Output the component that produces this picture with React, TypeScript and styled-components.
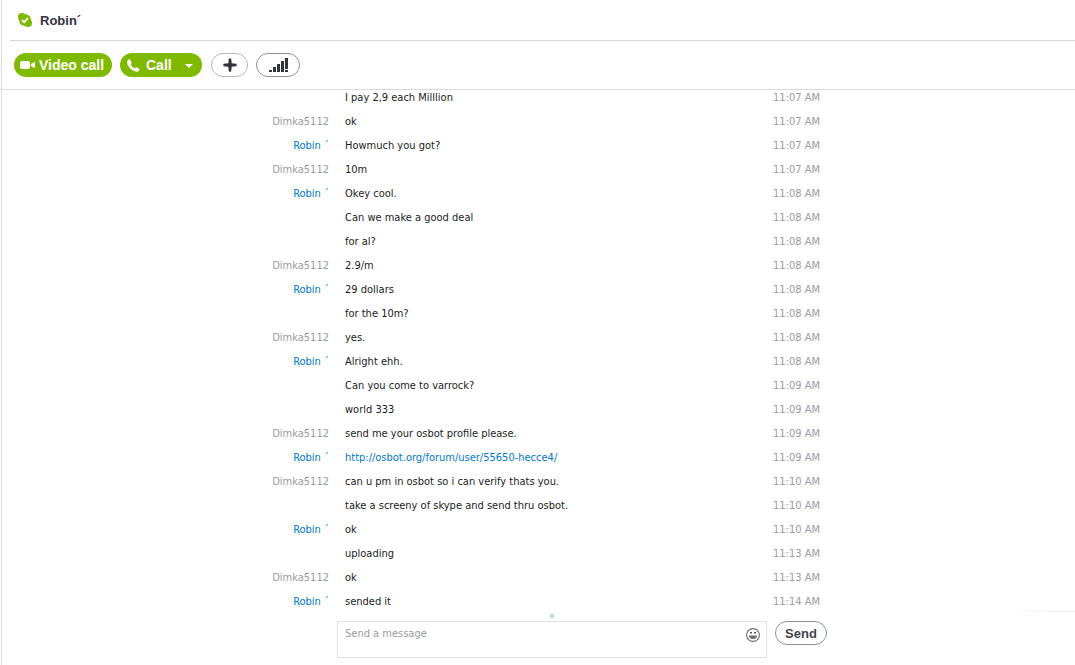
import React from "react";
import styled, { createGlobalStyle } from "styled-components";

const GlobalStyle = createGlobalStyle`
  *, *::before, *::after { box-sizing: border-box; }
  body { margin: 0; background: #fff; }
  button, input, textarea { font: inherit; color: inherit; margin: 0; }
`;

const chatFont = `"DejaVu Sans Condensed", Tahoma, sans-serif`;
const uiFont = `"Liberation Sans", Arial, sans-serif`;

const Window = styled.div`
  display: flex;
  flex-direction: column;
  height: 100vh;
  margin-left: 1px;
  border-left: 1px solid #d9d9db;
  font-family: ${uiFont};
  color: #33333d;
`;

const Header = styled.header`
  display: flex;
  align-items: center;
  gap: 8px;
  height: 41px;
  margin-left: 8px;
  padding-left: 8px;
  border-bottom: 1px solid #d9d9db;
`;

const Title = styled.h1`
  margin: 0;
  padding-top: 1px;
  font-size: 13px;
  line-height: 16px;
  font-weight: bold;
`;

const Toolbar = styled.div`
  display: flex;
  align-items: center;
  height: 49px;
  padding-left: 12px;
  border-bottom: 1px solid #d9d9db;
`;

const Pill = styled.button`
  display: flex;
  align-items: center;
  height: 24px;
  border: none;
  border-radius: 12px;
  background: #7fba00;
  color: #fff;
  font-size: 14px;
  line-height: 24px;
  font-weight: bold;
`;

const VideoButton = styled(Pill)`
  gap: 4px;
  width: 98px;
  padding: 0 6px;
`;

const CallGroup = styled.div`
  display: flex;
  width: 82px;
  margin: 0 9px 0 8px;
`;

const CallButton = styled(Pill)`
  gap: 6px;
  flex: 1;
  padding: 0 0 0 7px;
  border-radius: 12px 0 0 12px;
`;

const CallMenuButton = styled(Pill)`
  width: 25px;
  padding: 2px 0 0 8px;
  border-radius: 0 12px 12px 0;
`;

const OutlineButton = styled.button<{ $width: number; $tone?: string }>`
  display: flex;
  align-items: center;
  justify-content: center;
  width: ${(p) => p.$width}px;
  height: 24px;
  padding: 0;
  border: 1px solid ${(p) => p.$tone ?? "#8c9096"};
  border-radius: 12px;
  background: #fff;
  color: #42454d;
  font-size: 13px;
  font-weight: bold;
`;

const AddButton = styled(OutlineButton)`
  margin-right: 8px;
`;

const Messages = styled.main`
  display: flex;
  flex: 1;
  min-height: 0;
  flex-direction: column;
  justify-content: flex-end;
  align-items: center;
  overflow: hidden;
`;

const Log = styled.ol`
  width: 577px;
  max-width: 100%;
  margin: 0;
  padding: 0;
  list-style: none;
  flex: none;
  font-family: ${chatFont};
  font-size: 11px;
`;

const Row = styled.li`
  display: grid;
  grid-template-columns: 79px 1fr 54px;
  column-gap: 16px;
  height: 24px;
  line-height: 26px;
  white-space: nowrap;
`;

const Sender = styled.span<{ $own: boolean }>`
  text-align: right;
  color: ${(p) => (p.$own ? "#9a9a9f" : "#0078ca")};
`;

const Text = styled.span`
  color: #1b1b22;
`;

const Link = styled.a`
  color: #0078ca;
  text-decoration: none;
`;

const Time = styled.time`
  color: #9a9a9f;
`;

const Footer = styled.footer`
  position: relative;
  display: flex;
  justify-content: center;
  padding: 8px 0 7px;
`;

const Fade = styled.div`
  position: absolute;
  top: -2px;
  right: 0;
  width: 70px;
  height: 1px;
  background: linear-gradient(to right, #fff, #e8e8e8);
`;

const Composer = styled.form`
  position: relative;
  display: flex;
  align-items: flex-start;
  gap: 8px;
  width: 577px;
  max-width: 100%;
  padding-left: 87px;
`;

const TypingDot = styled.span`
  position: absolute;
  top: -7px;
  left: 300px;
  width: 4px;
  height: 4px;
  border: 1px solid #a9cdd4;
  border-radius: 1px;
  background: #d3e8ea;
`;

const Field = styled.div`
  display: flex;
  flex: 1;
  height: 37px;
  border: 1px solid #e1e1e3;
`;

const Input = styled.textarea`
  flex: 1;
  min-width: 0;
  padding: 4px 7px;
  border: none;
  outline: none;
  resize: none;
  overflow: hidden;
  background: transparent;
  font-family: ${chatFont};
  font-size: 11px;
  line-height: 16px;
  &::placeholder { color: #9a9a9f; opacity: 1; }
`;

const EmojiButton = styled.button`
  display: flex;
  width: 26px;
  height: 26px;
  padding: 6px;
  border: none;
  background: none;
`;

type Message = { from?: string; text: string; time: string; link?: boolean };

const OWN = "Dimka5112";
const PEER = "Robin ´";

const messages: Message[] = [
  { text: "I pay 2,9 each Milllion", time: "11:07 AM" },
  { from: OWN, text: "ok", time: "11:07 AM" },
  { from: PEER, text: "Howmuch you got?", time: "11:07 AM" },
  { from: OWN, text: "10m", time: "11:07 AM" },
  { from: PEER, text: "Okey cool.", time: "11:08 AM" },
  { text: "Can we make a good deal", time: "11:08 AM" },
  { text: "for al?", time: "11:08 AM" },
  { from: OWN, text: "2.9/m", time: "11:08 AM" },
  { from: PEER, text: "29 dollars", time: "11:08 AM" },
  { text: "for the 10m?", time: "11:08 AM" },
  { from: OWN, text: "yes.", time: "11:08 AM" },
  { from: PEER, text: "Alright ehh.", time: "11:08 AM" },
  { text: "Can you come to varrock?", time: "11:09 AM" },
  { text: "world 333", time: "11:09 AM" },
  { from: OWN, text: "send me your osbot profile please.", time: "11:09 AM" },
  { from: PEER, text: "http://osbot.org/forum/user/55650-hecce4/", time: "11:09 AM", link: true },
  { from: OWN, text: "can u pm in osbot so i can verify thats you.", time: "11:10 AM" },
  { text: "take a screeny of skype and send thru osbot.", time: "11:10 AM" },
  { from: PEER, text: "ok", time: "11:10 AM" },
  { text: "uploading", time: "11:13 AM" },
  { from: OWN, text: "ok", time: "11:13 AM" },
  { from: PEER, text: "sended it", time: "11:14 AM" },
];

const StatusIcon = () => (
  <svg width="14" height="14" viewBox="0 0 14 14" aria-hidden="true">
    <circle cx="7" cy="7" r="6" fill="#7fba00" />
    <circle cx="4" cy="4" r="4" fill="#7fba00" />
    <circle cx="10" cy="10" r="4" fill="#7fba00" />
    <path d="M4 7.200 6.200 9.200 10 5" fill="none" stroke="#fff" strokeWidth="1.800" />
  </svg>
);

const VideoIcon = () => (
  <svg width="15" height="8" viewBox="0 0 15 8" fill="#fff" aria-hidden="true">
    <rect width="10" height="8" rx="2" />
    <path d="M15 .8v6.400l-4-2.200V3z" />
  </svg>
);

const PhoneIcon = () => (
  <svg width="13" height="13" viewBox="0 0 13 13" fill="#fff" aria-hidden="true">
    <path d="M.6 1.600C1.200.6 2.200 0 2.800.5L4.600 3c.4.7-.1 1.200-.9 1.900.6 1.900 2.300 3.700 4.300 4.400.8-.8 1.300-1.200 2-.8l2.300 1.600c.6.6 0 1.500-.9 2.100-1.200.8-3.300.6-5.600-.9C2.500 9.300.4 6.600.2 4 .1 3 .2 2.300.6 1.600z" />
  </svg>
);

const CaretIcon = () => (
  <svg width="8" height="4" viewBox="0 0 8 4" fill="#fff" aria-hidden="true">
    <path d="M0 0h8L4 4z" />
  </svg>
);

const PlusIcon = () => (
  <svg width="14" height="14" viewBox="0 0 14 14" aria-hidden="true">
    <path
      d="M5.800.8Q7-.4 8.200.8L8.700 5.300 13.200 5.800Q14.400 7 13.200 8.200L8.700 8.700 8.200 13.200Q7 14.400 5.800 13.200L5.300 8.700.8 8.200Q-.4 7 .8 5.800L5.300 5.300z"
      fill="#33333d"
    />
  </svg>
);

const SignalIcon = () => (
  <svg width="19" height="14" viewBox="0 0 19 14" fill="#33333d" aria-hidden="true">
    <path d="M0 12h3v2H0zM4 9h3v5H4zM8 6h3v8H8zM12 3h3v11h-3zM16 0h3v11h-3zM16 12h3v2h-3z" />
  </svg>
);

const SmileIcon = () => (
  <svg width="14" height="14" viewBox="0 0 14 14" aria-hidden="true">
    <circle cx="7" cy="7" r="6.400" fill="none" stroke="#6c6e74" strokeWidth="1.100" />
    <rect x="4" y="4" width="2" height="1.500" fill="#55575e" />
    <rect x="8" y="4" width="2" height="1.500" fill="#55575e" />
    <path d="M3 7.500h8a4 3.500 0 0 1-8 0z" fill="#6c6e74" />
  </svg>
);

export default function App() {
  return (
    <Window>
      <GlobalStyle />
      <Header>
        <StatusIcon />
        <Title>Robin´</Title>
      </Header>
      <Toolbar>
        <VideoButton type="button">
          <VideoIcon />
          Video call
        </VideoButton>
        <CallGroup>
          <CallButton type="button">
            <PhoneIcon />
            Call
          </CallButton>
          <CallMenuButton type="button" aria-label="Call options">
            <CaretIcon />
          </CallMenuButton>
        </CallGroup>
        <AddButton type="button" $width={37} $tone="#b4b6ba" aria-label="Add people">
          <PlusIcon />
        </AddButton>
        <OutlineButton type="button" $width={44} aria-label="Call quality">
          <SignalIcon />
        </OutlineButton>
      </Toolbar>
      <Messages>
        <Log>
          {messages.map((m, i) => (
            <Row key={i}>
              <Sender $own={m.from === OWN}>{m.from}</Sender>
              <Text>{m.link ? <Link href={m.text}>{m.text}</Link> : m.text}</Text>
              <Time>{m.time}</Time>
            </Row>
          ))}
        </Log>
      </Messages>
      <Footer>
        <Fade />
        <Composer onSubmit={(e) => e.preventDefault()}>
          <TypingDot />
          <Field>
            <Input aria-label="Message" placeholder="Send a message" />
            <EmojiButton type="button" aria-label="Insert emoticon">
              <SmileIcon />
            </EmojiButton>
          </Field>
          <OutlineButton type="submit" $width={52}>
            Send
          </OutlineButton>
        </Composer>
      </Footer>
    </Window>
  );
}
